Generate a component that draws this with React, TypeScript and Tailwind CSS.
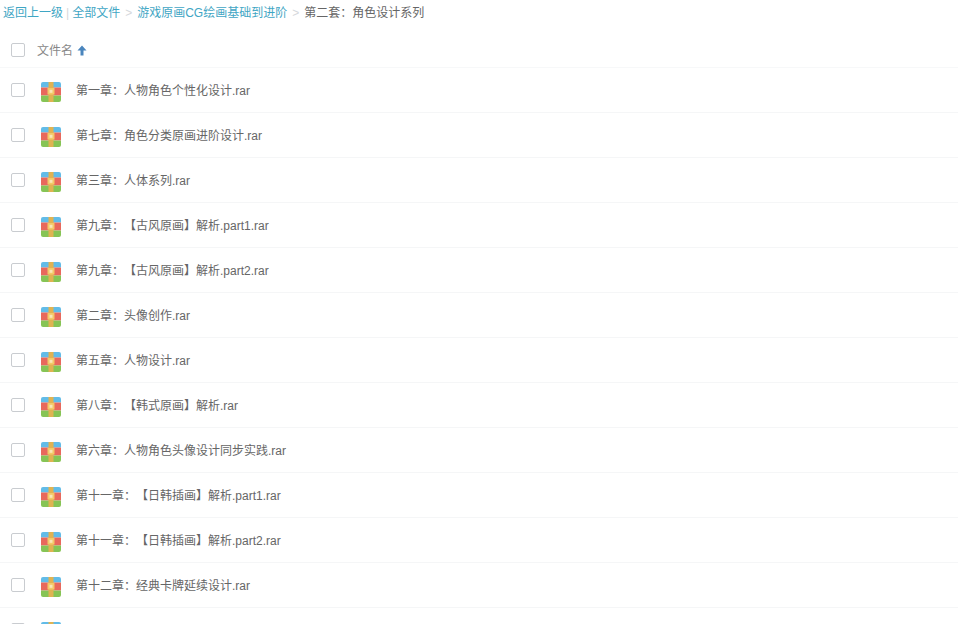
import React from 'react';

const files = [
  '第一章：人物角色个性化设计.rar',
  '第七章：角色分类原画进阶设计.rar',
  '第三章：人体系列.rar',
  '第九章：【古风原画】解析.part1.rar',
  '第九章：【古风原画】解析.part2.rar',
  '第二章：头像创作.rar',
  '第五章：人物设计.rar',
  '第八章：【韩式原画】解析.rar',
  '第六章：人物角色头像设计同步实践.rar',
  '第十一章：【日韩插画】解析.part1.rar',
  '第十一章：【日韩插画】解析.part2.rar',
  '第十二章：经典卡牌延续设计.rar',
  '',
];

const Checkbox = () => (
  <span className="block h-[14px] w-[14px] shrink-0 rounded-[2px] border border-[#c9ccd0] bg-white" />
);

const RarIcon = () => (
  <svg width="20" height="20" viewBox="0 0 20 20" className="block shrink-0">
    <path d="M2 0h16a2 2 0 0 1 2 2v3.5H0V2a2 2 0 0 1 2-2z" fill="#62bce8" />
    <rect x="0" y="5.5" width="20" height="8" fill="#e8685c" />
    <path d="M0 13.5h20V18a2 2 0 0 1-2 2H2a2 2 0 0 1-2-2z" fill="#86c455" />
    <rect x="7.5" y="0" width="5" height="20" fill="#e0b352" />
    <rect x="6.5" y="6" width="7" height="6.5" fill="#f3c968" />
    <rect x="8.5" y="7.8" width="3" height="3" fill="#f9e6b8" />
  </svg>
);

export default function App() {
  return (
    <div className="h-[624px] w-[958px] overflow-hidden bg-white font-['Liberation_Sans','Noto_Sans_CJK_SC',sans-serif] text-xs text-[#666] [text-spacing-trim:space-all]">
      <div className="flex h-[25px] items-center pl-[3px]">
        <span className="text-[#3fa6c4]">返回上一级</span>
        <span className="mx-[3px] text-[#d5d8dc]">|</span>
        <span className="text-[#3fa6c4]">全部文件</span>
        <span className="mx-[5px] text-[#d5d8dc]">&gt;</span>
        <span className="text-[#3fa6c4]">游戏原画CG绘画基础到进阶</span>
        <span className="mx-[5px] text-[#d5d8dc]">&gt;</span>
        <span className="text-[#666]">第二套：角色设计系列</span>
      </div>
      <div className="flex h-[43px] items-center border-b border-[#f7f8f9] pt-[8px] pl-[11px]">
        <Checkbox />
        <span className="mt-[2px] ml-[12px] text-[#888]">文件名</span>
        <svg width="10" height="11" viewBox="0 0 10 11" className="ml-[4px]">
          <path d="M5 0.5 9.5 5.5H6.5V10.5H3.5V5.5H0.5z" fill="#4a85bd" />
        </svg>
      </div>
      {files.map((name, i) => (
        <div key={i} className="flex h-[45px] items-center border-b border-[#f5f6f7] pl-[11px]">
          <Checkbox />
          <span className="mt-[4px] ml-[16px]">
            <RarIcon />
          </span>
          {name && <span className="mt-[2px] ml-[15px]">{name}</span>}
        </div>
      ))}
    </div>
  );
}
